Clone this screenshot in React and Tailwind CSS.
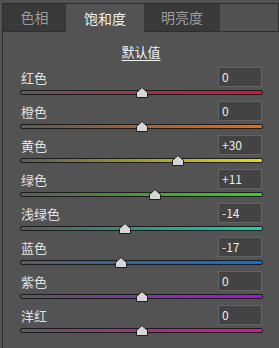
import React from "react";

const rows = [
  { label: "红色", value: "0", v: 0, color: "#e0103c" },
  { label: "橙色", value: "0", v: 0, color: "#ec6a0c" },
  { label: "黄色", value: "+30", v: 30, color: "#e8dc00" },
  { label: "绿色", value: "+11", v: 11, color: "#36d614" },
  { label: "浅绿色", value: "-14", v: -14, color: "#00dcb4" },
  { label: "蓝色", value: "-17", v: -17, color: "#0a6ee6" },
  { label: "紫色", value: "0", v: 0, color: "#a412e4" },
  { label: "洋红", value: "0", v: 0, color: "#e2109c" },
];

const font = { fontFamily: '"Noto Sans CJK SC", "Liberation Sans", sans-serif' };

const Thumb = ({ v }) => {
  // track is 243px wide, center 121.5, +-100 -> +-121
  const left = 121.5 + (v / 100) * 121 - 6;
  return (
    <svg
      width="12"
      height="11"
      viewBox="0 0 12 11"
      className="absolute top-[-3px]"
      style={{ left }}
    >
      <polygon
        points="6,0.5 11.5,5.5 11.5,10.5 0.5,10.5 0.5,5.5"
        fill="#d6d6d6"
        stroke="#1f1f1f"
      />
    </svg>
  );
};

const SliderRow = ({ row }) => (
  <div className="flex flex-col h-[34px]">
    <div className="flex items-center justify-between h-[20px]">
      <span className="text-[13px] text-[#e2e2e2] pl-[2px] leading-none">{row.label}</span>
      <div className="w-[44px] h-[20px] bg-[#434343] border border-[#646464] flex items-center pl-[3px] text-[12px] text-[#ececec] mr-[1px]">
        {row.value}
      </div>
    </div>
    <div className="relative mt-[3px] ml-[1px] w-[243px] h-[5px]">
      <div
        className="w-full h-full rounded-[2px] border border-[#1c1c1c]"
        style={{ background: `linear-gradient(to right, #5a5a5a, ${row.color})` }}
      />
      <Thumb v={row.v} />
    </div>
  </div>
);

export default function App() {
  return (
    <div className="w-[279px] h-[348px] bg-[#535353] pl-[2px] pt-[3px] overflow-hidden" style={font}>
      <div className="h-full border-l border-t border-[#2e2e2e] flex flex-col">
        <div className="flex h-[28px]">
          <div className="w-[63px] bg-[#393939] flex items-center justify-center text-[14px] text-[#9c9c9c] border-b border-[#2e2e2e]">
            色相
          </div>
          <div className="w-[76px] ml-[1px] bg-[#535353] flex items-center justify-center text-[14px] text-[#f0f0f0]">
            饱和度
          </div>
          <div className="w-[76px] ml-[1px] bg-[#393939] flex items-center justify-center text-[14px] text-[#9c9c9c] border-b border-[#2e2e2e]">
            明亮度
          </div>
          <div className="flex-1 ml-[1px] bg-[#525252] border-b border-[#2e2e2e] border-r" />
        </div>
        <div className="flex flex-col pl-[16px] pr-[16px]">
          <div className="flex justify-center mt-[13px] h-[22px]">
            <span className="text-[13px] text-[#f2f2f2] underline underline-offset-[3px] leading-none">默认值</span>
          </div>
          <div className="flex flex-col">
            {rows.map((r) => (
              <SliderRow key={r.label} row={r} />
            ))}
          </div>
        </div>
      </div>
    </div>
  );
}
